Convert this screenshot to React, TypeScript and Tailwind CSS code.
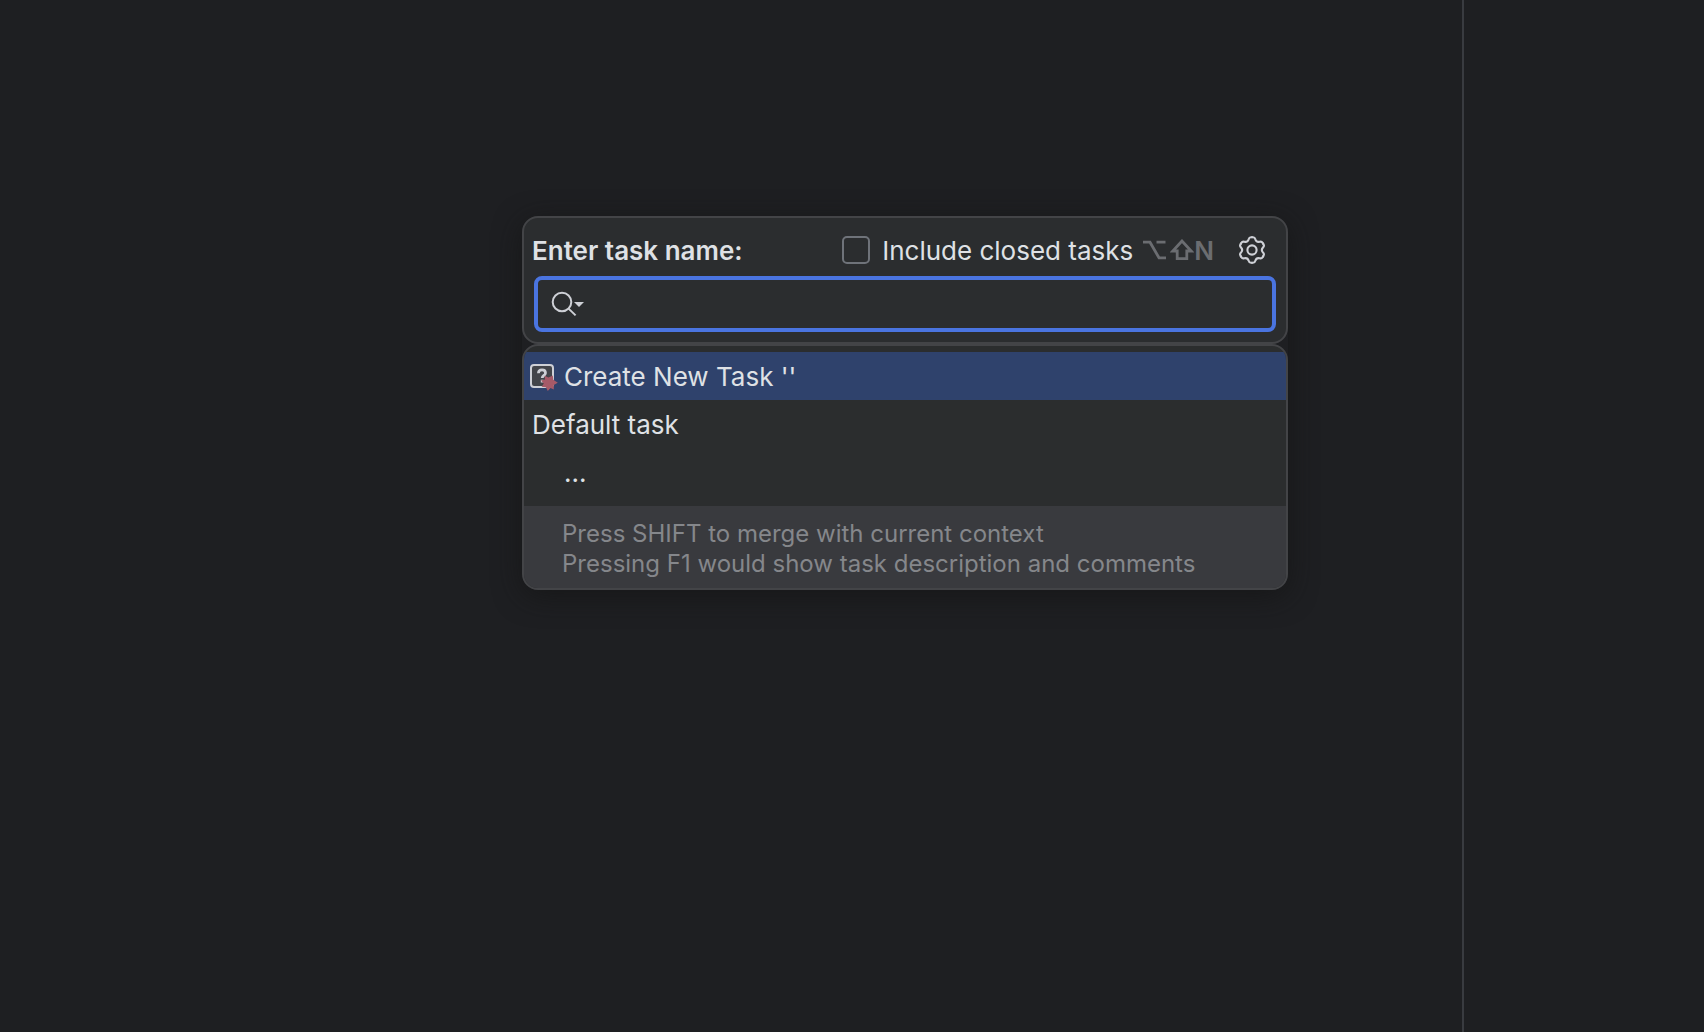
import { useState } from "react";

function SearchIcon() {
  return (
    <svg width="34" height="28" viewBox="0 0 34 28" fill="none" aria-hidden="true">
      <circle cx="12" cy="12" r="9.3" stroke="#ced0d6" strokeWidth="2" />
      <path d="M18.6 18.6L25.6 25.4" stroke="#ced0d6" strokeWidth="2" />
      <path d="M24 12h10l-5 5z" fill="#ced0d6" />
    </svg>
  );
}

const gearAngles = [30, 90, 150, 210, 270, 330];

function GearIcon() {
  return (
    <svg
      width="28"
      height="28"
      viewBox="0 0 28 28"
      fill="none"
      stroke="#ced0d6"
      strokeWidth="2.1"
      strokeLinecap="round"
      aria-hidden="true"
    >
      <circle cx="14" cy="14" r="4.6" />
      {gearAngles.map((angle) => (
        <path
          key={angle}
          transform={`rotate(${angle} 14 14)`}
          d="M7.6 2.9l.9-.5C9.8 1.65 10.7 2.2 11.5 3C13 4.4 15 4.4 16.5 3C17.3 2.2 18.2 1.65 19.5 2.4l.9.5"
        />
      ))}
    </svg>
  );
}

function OptionKey() {
  return (
    <svg width="23" height="20" viewBox="0 0 23 20" fill="none" stroke="#6b6d71" strokeWidth="2.8" aria-hidden="true">
      <path d="M0 2.2h7L16 17.8h7M13.5 2.2H22.5" />
    </svg>
  );
}

function ShiftKey() {
  return (
    <svg width="24" height="22" viewBox="0 0 24 22" fill="none" stroke="#6b6d71" strokeWidth="2.8" aria-hidden="true">
      <path d="M12 2L2.8 12h4.4v7.6h9.6V12h4.4z" />
    </svg>
  );
}

function NewTaskIcon() {
  return (
    <svg width="28" height="24" viewBox="0 0 28 24" fill="none" className="overflow-visible" aria-hidden="true">
      <rect x="1" y="1" width="22" height="22" rx="3" fill="#43454a" stroke="#ced0d6" strokeWidth="2" />
      <path
        d="M8.4 9.2c.1-2.2 1.6-3.3 3.6-3.3s3.5 1.1 3.5 3c0 2.5-3.3 2.5-3.3 5.2"
        stroke="#ced0d6"
        strokeWidth="2.7"
      />
      <path d="M10.8 15.8h2.8v2.6h-2.8z" fill="#ced0d6" />
      <path
        d="M14.6 11.8L18.4 13.6L22.8 11.4L23.3 15.8L27.8 18.8L23.8 21L23.8 25.6L20.5 24L17.8 27L15.9 23.2L11.6 22.8L13.8 19.4L11 16.4L15 15.6Z"
        fill="#a65a68"
      />
    </svg>
  );
}

export default function App() {
  const [query, setQuery] = useState("");
  const [closed, setClosed] = useState(false);

  return (
    <div className="relative flex min-h-screen bg-[#1e1f22] font-['Inter',sans-serif] text-[26px] text-[#dfe1e5]">
      <main className="flex-1" />
      <aside className="w-[242px] border-l-2 border-[#393b40]" />

      <div className="absolute inset-0 flex justify-end pt-[216px] pr-[416px]">
        <div role="dialog" aria-labelledby="task-title" className="h-fit w-[766px] rounded-2xl shadow-[0_6px_28px_rgba(20,20,20,0.7)]">
          <section className="rounded-2xl border-2 border-[#434447] bg-[#2b2d2f] px-2.5 pt-3.5 pb-2.5">
            <div className="-ml-0.5 flex h-9 items-center">
              <label id="task-title" htmlFor="task-name" className="flex-1 font-semibold">
                Enter task name:
              </label>
              <label className="flex items-center gap-3">
                <input
                  type="checkbox"
                  checked={closed}
                  onChange={(e) => setClosed(e.target.checked)}
                  className="size-7 appearance-none rounded-[5px] border-2 border-[#6f737a] checked:bg-[#3574f0]"
                />
                Include closed tasks
              </label>
              <div className="ml-2.5 flex items-center font-semibold text-[#6b6d71]">
                <OptionKey />
                <span className="ml-1 flex items-center">
                  <ShiftKey />N
                </span>
              </div>
              <button type="button" aria-label="Configure" className="mr-2.5 ml-6">
                <GearIcon />
              </button>
            </div>
            <div className="mt-2 flex h-14 items-center rounded-lg border-4 border-[#4a74e0]">
              <button type="button" aria-label="Search history" className="ml-3">
                <SearchIcon />
              </button>
              <input
                id="task-name"
                type="text"
                value={query}
                onChange={(e) => setQuery(e.target.value)}
                className="min-w-0 flex-1 bg-transparent px-2 outline-none"
              />
            </div>
          </section>

          <section className="overflow-hidden rounded-2xl border-2 border-[#434447] bg-[#2b2d2e] pt-1.5">
            <ul>
              <li>
                <button type="button" className="flex h-12 w-full items-center gap-1.5 bg-[#2f426c] pl-1.5 text-left">
                  <NewTaskIcon />
                  <span>Create New Task '{query}'</span>
                </button>
              </li>
              <li>
                <button type="button" className="flex h-12 w-full items-center pl-2 text-left">
                  Default task
                </button>
              </li>
              <li className="pb-2.5">
                <button type="button" className="flex h-12 w-full items-center pl-10 text-left">
                  ...
                </button>
              </li>
            </ul>
            <p className="bg-[#393a3e] pt-[13px] pb-[9px] pl-[38px] text-2xl leading-[30px] text-[#85878b]">
              Press SHIFT to merge with current context
              <br />
              Pressing F1 would show task description and comments
            </p>
          </section>
        </div>
      </div>
    </div>
  );
}
